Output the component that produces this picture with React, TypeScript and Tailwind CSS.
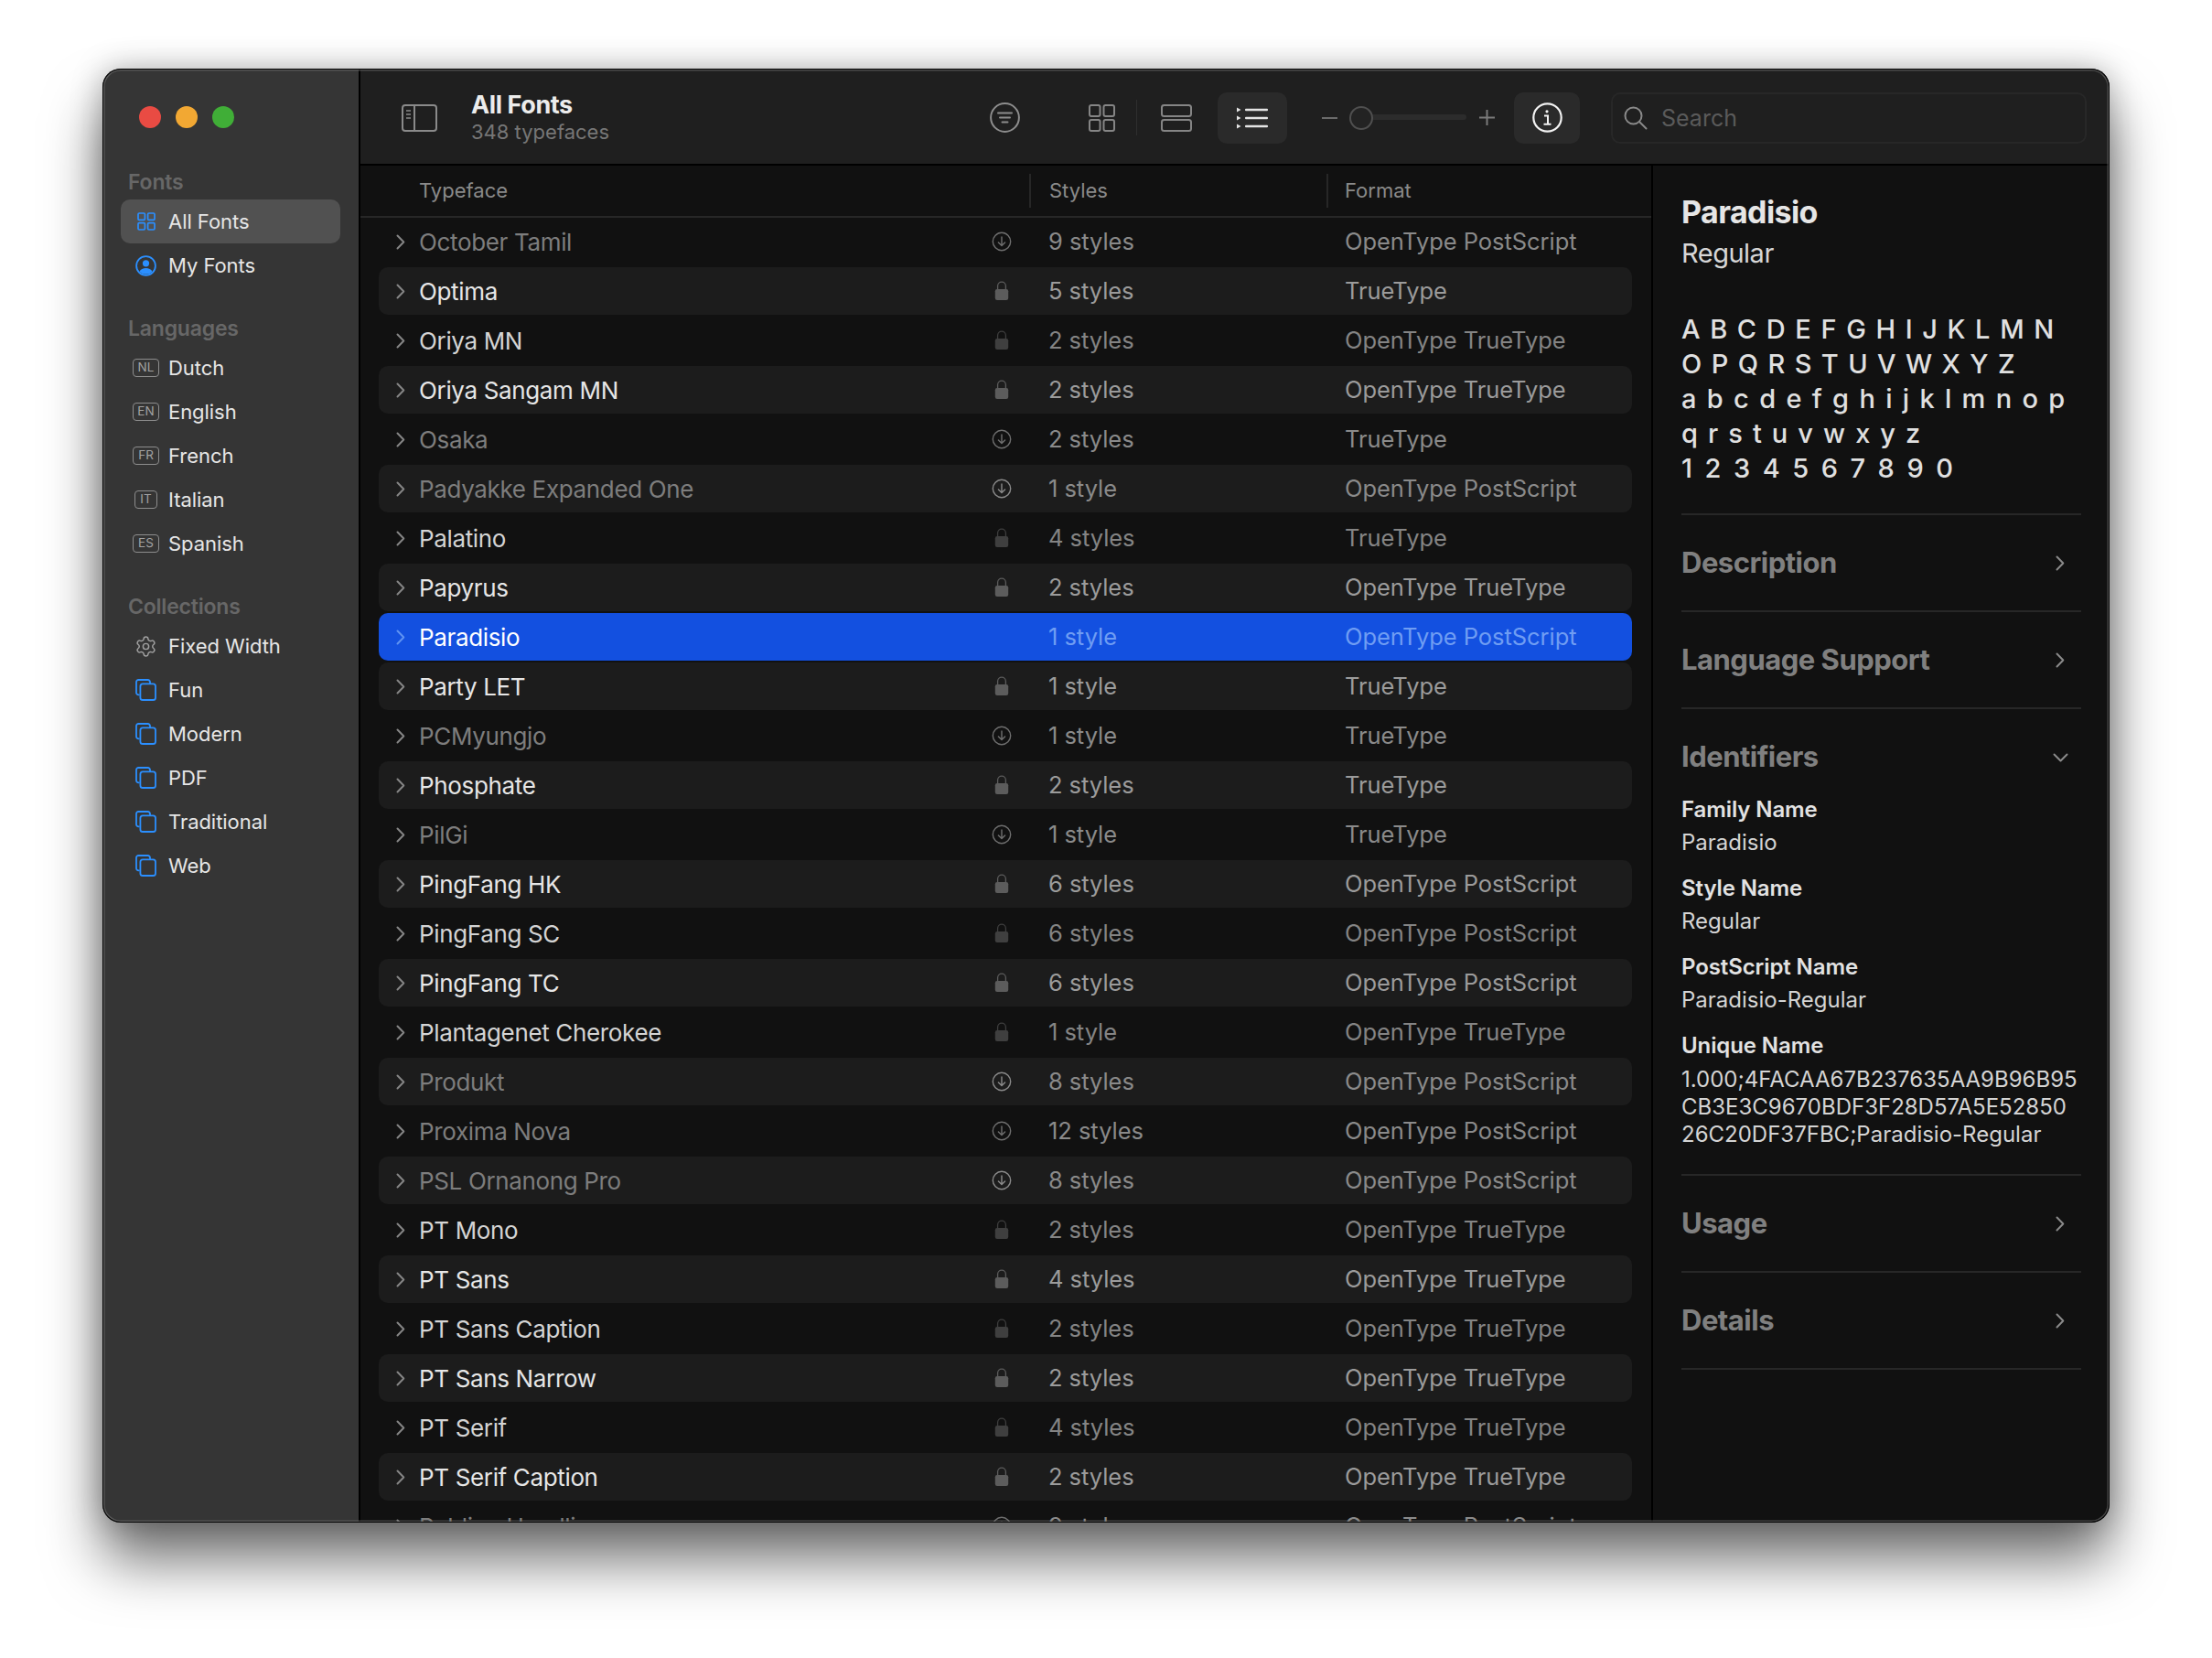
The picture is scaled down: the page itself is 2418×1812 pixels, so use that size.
import React from "react";
import { Settings } from "lucide-react";

const BLUE = "#2b8fff";

function Chevron({ className = "" }: { className?: string }) {
  return (
    <svg width="10" height="17" viewBox="0 0 10 17" fill="none" className={className}>
      <path d="M1.5 1.5 8.3 8.5l-6.8 7" stroke="currentColor" strokeWidth="2" strokeLinecap="round" strokeLinejoin="round" />
    </svg>
  );
}

function GridIcon({ size, color, sw }: { size: number; color: string; sw: number }) {
  return (
    <svg width={size} height={size} viewBox="0 0 20 20" fill="none" stroke={color} strokeWidth={sw}>
      <rect x="1" y="1" width="7.4" height="7.4" rx="1.2" />
      <rect x="11.6" y="1" width="7.4" height="7.4" rx="1.2" />
      <rect x="1" y="11.6" width="7.4" height="7.4" rx="1.2" />
      <rect x="11.6" y="11.6" width="7.4" height="7.4" rx="1.2" />
    </svg>
  );
}

function CollectionIcon() {
  return (
    <svg width="23" height="24" viewBox="0 0 23 24" fill="none" stroke={BLUE} strokeWidth="1.8">
      <path d="M4.6 17.4H3.4A2.4 2.4 0 0 1 1 15V3.4A2.4 2.4 0 0 1 3.4 1h10.2A2.4 2.4 0 0 1 16 3.4v2" />
      <rect x="5.4" y="5.4" width="16.6" height="17.6" rx="2.6" />
    </svg>
  );
}

function PersonIcon() {
  return (
    <svg width="23" height="23" viewBox="0 0 23 23" fill="none">
      <circle cx="11.5" cy="11.5" r="10.4" stroke={BLUE} strokeWidth="1.8" />
      <circle cx="11.5" cy="8.8" r="3.6" fill={BLUE} />
      <path d="M4.4 18c1.4-2.8 4-3.9 7.1-3.9s5.7 1.1 7.1 3.9a10.3 10.3 0 0 1-14.2 0Z" fill={BLUE} />
    </svg>
  );
}

function Tag({ code }: { code: string }) {
  const w = code === "IT" ? "w-[25px]" : "w-[29px]";
  return (
    <span className={`flex h-[20px] ${w} items-center justify-center rounded-[4px] border-[1.5px] border-[#8d8d8d] text-[13.5px] leading-none text-[#a2a2a2]`}>
      {code}
    </span>
  );
}

function SideLabel({ children }: { children: React.ReactNode }) {
  return (
    <div className="mb-[1px] flex h-[36px] items-center pl-[8px] text-[23px] font-semibold tracking-[-0.2px] text-[#676767]">
      {children}
    </div>
  );
}

function SideItem({ icon, label, selected = false }: { icon: React.ReactNode; label: string; selected?: boolean }) {
  return (
    <div className={`flex h-[48px] items-center rounded-[10px] ${selected ? "bg-[#515151]" : ""}`}>
      <span className="flex w-[52px] shrink-0 items-center justify-center pl-[3px]">{icon}</span>
      <span className="text-[22px] tracking-[-0.05px] text-[#e6e6e6]">{label}</span>
    </div>
  );
}

type Row = { n: string; s: string; f: string; dl?: boolean };
const rows: Row[] = [
  { n: "October Tamil", s: "9 styles", f: "OpenType PostScript", dl: true },
  { n: "Optima", s: "5 styles", f: "TrueType" },
  { n: "Oriya MN", s: "2 styles", f: "OpenType TrueType" },
  { n: "Oriya Sangam MN", s: "2 styles", f: "OpenType TrueType" },
  { n: "Osaka", s: "2 styles", f: "TrueType", dl: true },
  { n: "Padyakke Expanded One", s: "1 style", f: "OpenType PostScript", dl: true },
  { n: "Palatino", s: "4 styles", f: "TrueType" },
  { n: "Papyrus", s: "2 styles", f: "OpenType TrueType" },
  { n: "Paradisio", s: "1 style", f: "OpenType PostScript" },
  { n: "Party LET", s: "1 style", f: "TrueType" },
  { n: "PCMyungjo", s: "1 style", f: "TrueType", dl: true },
  { n: "Phosphate", s: "2 styles", f: "TrueType" },
  { n: "PilGi", s: "1 style", f: "TrueType", dl: true },
  { n: "PingFang HK", s: "6 styles", f: "OpenType PostScript" },
  { n: "PingFang SC", s: "6 styles", f: "OpenType PostScript" },
  { n: "PingFang TC", s: "6 styles", f: "OpenType PostScript" },
  { n: "Plantagenet Cherokee", s: "1 style", f: "OpenType TrueType" },
  { n: "Produkt", s: "8 styles", f: "OpenType PostScript", dl: true },
  { n: "Proxima Nova", s: "12 styles", f: "OpenType PostScript", dl: true },
  { n: "PSL Ornanong Pro", s: "8 styles", f: "OpenType PostScript", dl: true },
  { n: "PT Mono", s: "2 styles", f: "OpenType TrueType" },
  { n: "PT Sans", s: "4 styles", f: "OpenType TrueType" },
  { n: "PT Sans Caption", s: "2 styles", f: "OpenType TrueType" },
  { n: "PT Sans Narrow", s: "2 styles", f: "OpenType TrueType" },
  { n: "PT Serif", s: "4 styles", f: "OpenType TrueType" },
  { n: "PT Serif Caption", s: "2 styles", f: "OpenType TrueType" },
  { n: "Publico Headline", s: "9 styles", f: "OpenType PostScript", dl: true },
];

function LockIcon({ color }: { color: string }) {
  return (
    <svg width="16" height="22" viewBox="0 0 16 22">
      <path d="M3.6 9.5V5.6a4.4 4.4 0 0 1 8.8 0v3.9" fill="none" stroke={color} strokeWidth="1.3" />
      <rect x="0.8" y="9" width="14.4" height="12" rx="2.2" fill={color} />
    </svg>
  );
}

function DownloadIcon({ color }: { color: string }) {
  return (
    <svg width="22" height="22" viewBox="0 0 22 22" fill="none" stroke={color} strokeWidth="1.4" strokeLinecap="round" strokeLinejoin="round">
      <circle cx="11" cy="11" r="9.7" />
      <path d="M11 6v9.4M7.4 11.9 11 15.5l3.6-3.6" />
    </svg>
  );
}

function FontRow({ r, i }: { r: Row; i: number }) {
  const sel = r.n === "Paradisio";
  const striped = i % 2 === 1;
  const bg = sel ? "bg-[#1350e0]" : striped ? "bg-[#1c1c1c]" : "";
  const name = sel ? "text-white" : r.dl ? "text-[#7d7d7d]" : striped ? "text-[#e6e6e6]" : "text-[#d4d4d4]";
  const sub = sel ? "text-[#6f9df3]" : r.dl ? "text-[#8a8a8a]" : striped ? "text-[#9b9b9b]" : "text-[#848484]";
  const chev = sel ? "text-[#5f93f2]" : "text-[#858585]";
  return (
    <div className={`grid h-[52px] shrink-0 grid-cols-[44px_620px_34px_34px_324px_1fr] items-center rounded-[10px] ${bg}`}>
      <span className="flex justify-center pl-[3px]">
        <Chevron className={chev} />
      </span>
      <span className={`truncate text-[26px] tracking-[-0.35px] ${name}`}>{r.n}</span>
      <span className="flex justify-center">
        {sel ? null : r.dl ? <DownloadIcon color={striped ? "#8a8a8a" : "#6f6f6f"} /> : <LockIcon color={striped ? "#5c5c5c" : "#3f3f3f"} />}
      </span>
      <span />
      <span className={`pt-[1px] text-[25.5px] tracking-[-0.05px] ${sub}`}>{r.s}</span>
      <span className={`whitespace-nowrap pt-[1px] text-[25.5px] tracking-[-0.05px] ${sub}`}>{r.f}</span>
    </div>
  );
}

function SectionHead({ title }: { title: string }) {
  return (
    <div className="box-content flex h-[104px] items-center justify-between border-b-2 border-[#272727] pr-[18px]">
      <span className="text-[31px] font-bold tracking-[-0.5px] text-[#808080]">{title}</span>
      <Chevron className="text-[#8a8a8a]" />
    </div>
  );
}

function Field({ label, value }: { label: string; value: string }) {
  return (
    <div className="mb-[22px]">
      <div className="mb-[8px] text-[24px] leading-[28px] font-semibold tracking-[-0.1px] text-[#e2e2e2]">{label}</div>
      <div className="text-[24px] leading-[28px] text-[#d4d4d4]">{value}</div>
    </div>
  );
}

export default function App() {
  return (
    <div className="h-[1812px] w-[2418px] overflow-hidden bg-white pl-[112px] pt-[75px] [font-family:Inter,sans-serif]">
      <div className="relative flex h-[1589px] w-[2194px] overflow-hidden rounded-[20px] bg-[#111111] shadow-[0_42px_62px_rgba(0,0,0,0.55),0_0_34px_rgba(0,0,0,0.28)]">
        {/* Sidebar */}
        <aside className="flex w-[282px] shrink-0 flex-col border-r-2 border-black bg-[#353535] pl-[20px] pr-[20px] pt-[41px]">
          <div className="flex h-[24px] gap-[16px] pl-[20px]">
            <span className="h-[24px] w-[24px] rounded-full bg-[#e94b43]" />
            <span className="h-[24px] w-[24px] rounded-full bg-[#f2a833]" />
            <span className="h-[24px] w-[24px] rounded-full bg-[#40ae37]" />
          </div>
          <div className="mt-[41px]">
            <SideLabel>Fonts</SideLabel>
            <SideItem selected icon={<GridIcon size={20} color={BLUE} sw={1.7} />} label="All Fonts" />
            <SideItem icon={<PersonIcon />} label="My Fonts" />
          </div>
          <div className="mt-[27px]">
            <SideLabel>Languages</SideLabel>
            <SideItem icon={<Tag code="NL" />} label="Dutch" />
            <SideItem icon={<Tag code="EN" />} label="English" />
            <SideItem icon={<Tag code="FR" />} label="French" />
            <SideItem icon={<Tag code="IT" />} label="Italian" />
            <SideItem icon={<Tag code="ES" />} label="Spanish" />
          </div>
          <div className="mt-[27px]">
            <SideLabel>Collections</SideLabel>
            <SideItem icon={<Settings size={25} strokeWidth={1.4} color="#a0a0a0" />} label="Fixed Width" />
            <SideItem icon={<CollectionIcon />} label="Fun" />
            <SideItem icon={<CollectionIcon />} label="Modern" />
            <SideItem icon={<CollectionIcon />} label="PDF" />
            <SideItem icon={<CollectionIcon />} label="Traditional" />
            <SideItem icon={<CollectionIcon />} label="Web" />
          </div>
        </aside>

        {/* Main */}
        <div className="flex min-w-0 flex-1 flex-col">
          {/* Toolbar */}
          <header className="box-border flex h-[106px] shrink-0 items-center border-b-2 border-black bg-[#1f1f1f] pl-[45px] pt-[3px]">
            <svg width="39" height="30" viewBox="0 0 39 30" fill="none" stroke="#8a8a8a" strokeWidth="2">
              <rect x="1" y="1" width="37" height="28" rx="3" />
              <path d="M14 1v28" />
              <path d="M5 7h5M5 11h5M5 15h5" strokeWidth="1.6" />
            </svg>
            <div className="ml-[37px] w-[567px]">
              <div className="text-[27px] leading-[30px] font-bold tracking-[-0.4px] text-[#ececec]">All Fonts</div>
              <div className="text-[22px] leading-[28px] text-[#767676]">348 typefaces</div>
            </div>
            <svg width="33" height="33" viewBox="0 0 33 33" fill="none" stroke="#8d8d8d" strokeWidth="2" strokeLinecap="round">
              <circle cx="16.5" cy="16.5" r="15.4" />
              <path d="M9 11.5h15M11 16.5h11M13.5 21.5h6" />
            </svg>
            <span className="ml-[75px]">
              <svg width="29" height="30" viewBox="0 0 29 30" fill="none" stroke="#858585" strokeWidth="2" className="block">
                <rect x="1" y="1" width="11.5" height="12" rx="2" />
                <rect x="16.5" y="1" width="11.5" height="12" rx="2" />
                <rect x="1" y="17" width="11.5" height="12" rx="2" />
                <rect x="16.5" y="17" width="11.5" height="12" rx="2" />
              </svg>
            </span>
            <span className="ml-[23px] h-[39px] w-[1px] bg-[#2e2e2e]" />
            <svg width="34" height="30" viewBox="0 0 34 30" fill="none" stroke="#858585" strokeWidth="2" className="ml-[26px]">
              <rect x="1" y="1" width="32" height="12" rx="2.5" />
              <rect x="1" y="17" width="32" height="12" rx="2.5" />
            </svg>
            <span className="ml-[28px] flex h-[56px] w-[76px] items-center justify-center rounded-[10px] bg-[#2a2a2a]">
              <svg width="34" height="24" viewBox="0 0 34 24" fill="#e4e4e4">
                <path d="M0 .5 4.5 3 0 5.5ZM0 9.5 4.5 12 0 14.5ZM0 18.5 4.5 21 0 23.5Z" />
                <rect x="9" y="1.8" width="25" height="2.4" rx="1" />
                <rect x="9" y="10.8" width="25" height="2.4" rx="1" />
                <rect x="9" y="19.8" width="25" height="2.4" rx="1" />
              </svg>
            </span>
            <svg width="17" height="17" viewBox="0 0 17 17" className="ml-[38px]" stroke="#6b6b6b" strokeWidth="2">
              <path d="M0 9h17" />
            </svg>
            <div className="relative ml-[13px] h-[26px] w-[128px]">
              <span className="absolute left-[10px] right-0 top-[9px] h-[6px] rounded-full bg-[#2c2c2c]" />
              <span className="absolute left-0 top-0 h-[26px] w-[26px] rounded-full border-2 border-[#4f4f4f] bg-[#232323]" />
            </div>
            <svg width="17" height="17" viewBox="0 0 17 17" className="ml-[14px]" stroke="#7a7a7a" strokeWidth="2">
              <path d="M0 8.5h17M8.5 0v17" />
            </svg>
            <span className="ml-[21px] flex h-[56px] w-[72px] items-center justify-center rounded-[10px] bg-[#2a2a2a]">
              <svg width="33" height="33" viewBox="0 0 33 33" fill="none" stroke="#f2f2f2" strokeWidth="2.2">
                <circle cx="16.5" cy="16.5" r="15.2" />
                <circle cx="16" cy="9.8" r="1.6" fill="#f2f2f2" stroke="none" />
                <path d="M13 14.5h4v9M12.5 23.8h8" strokeWidth="2" />
              </svg>
            </span>
            <div className="ml-[34px] flex h-[56px] w-[520px] items-center rounded-[10px] border-2 border-[#272727] pl-[12px]">
              <svg width="26" height="26" viewBox="0 0 26 26" fill="none" stroke="#8a8a8a" strokeWidth="2" strokeLinecap="round">
                <circle cx="10.5" cy="10.5" r="9" />
                <path d="M17 17l7.5 7.5" />
              </svg>
              <span className="ml-[15px] pt-[2px] text-[25px] text-[#5a5a5a]">Search</span>
            </div>
          </header>

          {/* Body */}
          <div className="flex min-h-0 flex-1">
            {/* List */}
            <section className="flex h-full w-[1411px] shrink-0 flex-col overflow-hidden">
              <div className="flex h-[57px] shrink-0 items-center border-b-2 border-[#272727] text-[22px] text-[#8a8a8a]">
                <span className="ml-[64px] w-[667px]">Typeface</span>
                <span className="flex h-[37px] w-[325px] items-center border-l-2 border-[#272727] pl-[20px]">Styles</span>
                <span className="flex h-[37px] items-center border-l-2 border-[#272727] pl-[18px]">Format</span>
              </div>
              <div className="flex flex-col gap-[2px] pl-[20px] pr-[21px]">
                {rows.map((r, i) => (
                  <FontRow key={r.n} r={r} i={i} />
                ))}
              </div>
            </section>

            {/* Info */}
            <section className="min-w-0 flex-1 border-l-2 border-black pl-[31px] pr-[31px] pt-[31px]">
              <div className="text-[34px] leading-[40px] font-bold tracking-[-0.6px] text-[#e6e6e6]">Paradisio</div>
              <div className="mt-[7px] text-[29px] leading-[36px] tracking-[-0.5px] text-[#d6d6d6]">Regular</div>
              <div className="mb-[30px] mt-[46px] whitespace-nowrap text-[29px] font-medium leading-[38px] text-[#e0e0e0]">
                <div className="tracking-[1.45px]">A B C D E F G H I J K L M N</div>
                <div className="tracking-[1.35px]">O P Q R S T U V W X Y Z</div>
                <div className="tracking-[1.8px]">a b c d e f g h i j k l m n o p</div>
                <div className="tracking-[1.66px]">q r s t u v w x y z</div>
                <div className="tracking-[2.9px]">1 2 3 4 5 6 7 8 9 0</div>
              </div>
              <div className="border-t-2 border-[#272727]" />
              <SectionHead title="Description" />
              <SectionHead title="Language Support" />
              <div className="flex h-[96px] items-start justify-between pr-[14px] pt-[32px]">
                <span className="text-[31px] leading-[40px] font-bold tracking-[-0.5px] text-[#808080]">Identifiers</span>
                <svg width="17" height="10" viewBox="0 0 17 10" fill="none" className="mt-[16px]" stroke="#8a8a8a" strokeWidth="2" strokeLinecap="round" strokeLinejoin="round">
                  <path d="M1.5 1.5 8.5 8.5l7-7" />
                </svg>
              </div>
              <Field label="Family Name" value="Paradisio" />
              <Field label="Style Name" value="Regular" />
              <Field label="PostScript Name" value="Paradisio-Regular" />
              <div className="mb-[8px] text-[24px] leading-[28px] font-semibold tracking-[-0.1px] text-[#e2e2e2]">Unique Name</div>
              <div className="whitespace-nowrap text-[24px] leading-[30px] text-[#d4d4d4]">
                <div>1.000;4FACAA67B237635AA9B96B95</div>
                <div>CB3E3C9670BDF3F28D57A5E52850</div>
                <div>26C20DF37FBC;Paradisio-Regular</div>
              </div>
              <div className="mt-[28px] border-t-2 border-[#272727]" />
              <SectionHead title="Usage" />
              <SectionHead title="Details" />
            </section>
          </div>
        </div>

        {/* Window edge highlight, lying over the content */}
        <div className="pointer-events-none absolute inset-0 rounded-[20px] border border-black shadow-[inset_0_0_0_1.5px_rgba(110,110,110,0.55)]" />
      </div>
    </div>
  );
}
